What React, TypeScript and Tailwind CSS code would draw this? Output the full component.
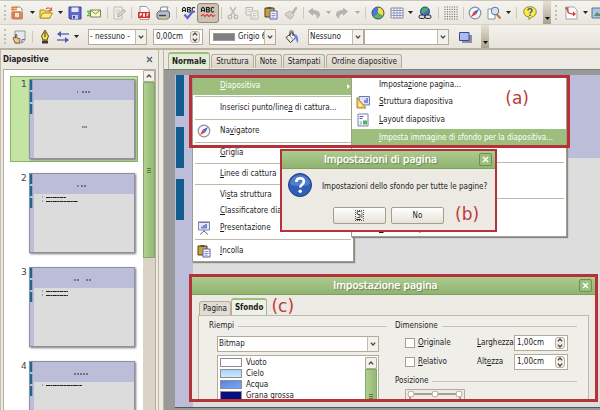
import { useState, type ReactNode } from "react";
import clsx from "clsx";

type IconProps = { children: ReactNode; className?: string };

function Icon({ children, className }: IconProps) {
  return (
    <svg viewBox="0 0 14 14" className={clsx("size-[14px] shrink-0", className)} fill="none" aria-hidden="true">
      {children}
    </svg>
  );
}

const NewIcon = () => (
  <Icon>
    <path d="M3 1h7l2 2v10H3z" fill="#fff" stroke="#8d9196" />
    <path d="M1 1.500h7M1 3.500h6" stroke="#e8873a" strokeWidth="1.4" />
    <path d="M4 6h6v6H4z" fill="#fbe3cf" stroke="#dd6a2c" strokeWidth="1.6" />
    <path d="M2 6v7M12 6v7" stroke="#c35a24" />
  </Icon>
);
const OpenIcon = () => (
  <Icon>
    <path d="M1 12V4h4l1 1h5v7z" fill="#f5dd63" stroke="#b08f1e" />
    <path d="M1 12l3-5h9.500l-3 5z" fill="#fdf08c" stroke="#b08f1e" />
    <path d="M7 3c2-2 4-1 5 1M12.500 1.500V4.500H9.500" stroke="#e0604a" strokeWidth="1.2" />
  </Icon>
);
const SaveIcon = () => (
  <Icon>
    <path d="M1 1h12v12H2l-1-1z" fill="#5e69cf" stroke="#3a429b" />
    <path d="M3.500 1.500h7v4.500h-7z" fill="#e7edfb" />
    <path d="M4 9h6v4H4z" fill="#c6cbe0" />
    <path d="M5 10h2v2.500H5z" fill="#3a429b" />
  </Icon>
);
const MailIcon = () => (
  <Icon>
    <path d="M3.500 4h10v7h-10z" fill="#fdfbc8" stroke="#7f8263" />
    <path d="M3.500 4l5 4 5-4" stroke="#7f8263" />
    <path d="M0 5.500h3M1 7.500h3M0 9.500h3" stroke="#53b848" strokeWidth="1.4" />
  </Icon>
);
const EditIcon = () => (
  <Icon>
    <path d="M2 1h8v12H2z" fill="#f1efea" stroke="#c2beb5" />
    <path d="M4 4h4M4 6h4M4 8h2" stroke="#cbc8c0" />
    <path d="M5.500 11l1-3 5-5 2 2-5 5z" fill="#d5d2ca" stroke="#b2aea4" />
  </Icon>
);
const PdfIcon = () => (
  <Icon>
    <path d="M3 .5h6l3 3v10H3z" fill="#fff" stroke="#9a9a9a" />
    <path d="M1 6h12v6H1z" fill="#dd2b2b" />
    <path d="M3 10.500v-3h1.500v1.500H3M6.500 7.500v3h1v-3zM10 10.500v-3h1.500M10 9h1.500" stroke="#fff" strokeWidth=".9" />
  </Icon>
);
const PrintIcon = () => (
  <Icon>
    <path d="M4 6l1-5h7l-1.500 5z" fill="#fff" stroke="#81848b" />
    <path d="M1 7l2-2h9.500l1 2v4l-2 2H2l-1-2z" fill="#b9bcc9" stroke="#5f626c" />
    <path d="M3 9.500h7" stroke="#44464f" strokeWidth="1.4" />
    <path d="M3 12l8 0" stroke="#e9d55a" />
  </Icon>
);
const SpellIcon = ({ check }: { check?: boolean }) => (
  <svg viewBox="0 0 16 14" className="h-[14px] w-4 shrink-0" fill="none" aria-hidden="true">
    <path
      d="M1.500 6V3l1-1.500h1l1 1.500v3M1.500 4.500h3M6.500 6V1.500h2.500l.5 1-1 1.200h-2M8.500 3.700l1 1-.5 1.300H6.500M14 2l-1-.5h-1l-.8 1.200v2l.8 1.300h1l1-.5"
      stroke="#222"
      strokeWidth="1.100"
    />
    {check ? (
      <path d="M3.500 8.500l3 3.500 6-7.500" stroke="#5b63d6" strokeWidth="2.200" />
    ) : (
      <path d="M1 10l2-1.500L5 10.500l2-2 2 2 2-2 2 2 2-1.500" stroke="#e5382f" strokeWidth="1.100" />
    )}
  </svg>
);
const CutIcon = () => (
  <Icon>
    <path d="M4 1l5 8M10 1L5 9" stroke="#c3bfb6" strokeWidth="1.600" />
    <circle cx="4" cy="11" r="1.800" stroke="#bab6ac" strokeWidth="1.300" />
    <circle cx="10" cy="11" r="1.800" stroke="#bab6ac" strokeWidth="1.300" />
  </Icon>
);
const CopyIcon = () => (
  <Icon>
    <path d="M1 1.500h6.500V9H1z" fill="#efede8" stroke="#bdb9af" />
    <path d="M6 5h7v8H6z" fill="#f3f1ed" stroke="#bdb9af" />
    <path d="M2.500 3.500h3M2.500 5.500h3M7.500 7.500h4M7.500 9.500h4M7.500 11h3" stroke="#c9c6be" />
  </Icon>
);
const PasteIcon = () => (
  <Icon>
    <path d="M1 2h9v9H1z" fill="#c8a03b" stroke="#4f4319" />
    <path d="M3.500 1h4v2h-4z" fill="#565344" />
    <path d="M6 5h7v8H6z" fill="#f6f7ff" stroke="#5560ab" />
    <path d="M7.500 7.500h4M7.500 9.500h4M7.500 11.200h3" stroke="#6d78c4" strokeWidth=".8" />
  </Icon>
);
const BrushIcon = () => (
  <Icon>
    <path d="M8 6l4-5 1 1-3.500 5.500z" fill="#c5c1b7" stroke="#b5b1a7" />
    <path d="M1 8l5-3 4 4-3 4C4 12 2 11 1 8z" fill="#dbd8d0" stroke="#b9b5aa" />
    <path d="M3 9l3 3M4.500 7.500l3.500 4" stroke="#c0bcb2" />
  </Icon>
);
const UndoIcon = ({ flip }: { flip?: boolean }) => (
  <Icon className={clsx(flip && "-scale-x-100")}>
    <path d="M1 5.500L6 1.500v2.500c4 0 7 1.500 7 4.500 0 2-1.500 3.500-4 4 1.500-2 .5-4.500-3-4.500V10z" fill="#b7b4ac" />
  </Icon>
);
const PieIcon = () => (
  <Icon>
    <circle cx="7" cy="7" r="6" fill="#4d78dd" />
    <path d="M7 7V1a6 6 0 0 1 5.200 9z" fill="#f5e03c" />
    <path d="M7 7l5.200 3a6 6 0 0 1-9.700 1z" fill="#5cb850" />
    <circle cx="7" cy="7" r="6" stroke="#4b4f6b" />
  </Icon>
);
const TableIcon = () => (
  <Icon>
    <path d="M1 2h12v10H1z" fill="#fff" stroke="#8087a8" />
    <path d="M1 4.500h12M1 7h12M1 9.500h12M4 2v10M7 2v10M10 2v10" stroke="#8f97ba" />
  </Icon>
);
const GlobeIcon = () => (
  <Icon>
    <circle cx="7" cy="5.500" r="4.500" fill="#3e6fd0" stroke="#27427c" />
    <path d="M4 3l3-1.500 3 1-1 2.500-2 .5L5.500 8 3.500 6z" fill="#4fb34b" />
    <rect x="1" y="9" width="6" height="3.500" rx="1.700" fill="#ddd" stroke="#222" />
    <rect x="7" y="9" width="6" height="3.500" rx="1.700" fill="#ddd" stroke="#222" />
  </Icon>
);
const GridIcon = () => (
  <Icon>
    <path
      d="M.5 1h13M.5 3.400h13M.5 5.800h13M.5 8.200h13M.5 10.600h13M.5 13h13"
      stroke="#55534e"
      strokeDasharray="1 1.400"
    />
  </Icon>
);
const CompassIcon = () => (
  <Icon>
    <circle cx="7" cy="7" r="5.800" fill="#f4f6fb" stroke="#8a909c" strokeWidth="1.200" />
    <path d="M11 3L8.300 8.300 5.700 5.700z" fill="#3b64c4" />
    <path d="M3 11l2.700-5.300 2.600 2.600z" fill="#e23c32" />
  </Icon>
);
const ZoomIcon = () => (
  <Icon>
    <path d="M1 3h7v10H1z" fill="#fff" stroke="#8c93a6" />
    <path d="M9.500 8l4 4.500" stroke="#b7793d" strokeWidth="2" />
    <circle cx="8" cy="5" r="3.800" fill="#cfe2f8" stroke="#65718c" />
  </Icon>
);
const HelpIcon = () => (
  <Icon>
    <path d="M7 .8c4 0 6.200 2 6.200 5S11 10.800 8.500 11L6 13.500V11C3 10.600.8 9 .8 5.800S3 .8 7 .8z" fill="#f9ec45" stroke="#8d8530" />
    <path d="M5 4.500c0-2.500 4-2.500 4 0 0 1.500-2 1.500-2 3M7 8.500V10" stroke="#3f4ab0" strokeWidth="1.400" />
  </Icon>
);
const PointsIcon = () => (
  <Icon>
    <path d="M2 1h8l3 3v9H2z" fill="#fff" stroke="#a2a5aa" />
    <path d="M4 3c-1 4 1 5 6 5" stroke="#d83a34" strokeWidth="1.400" />
    <path d="M1 1.500h4L3 4.500zM9 5.500v5l3-2.500z" fill="#d83a34" />
    <path d="M1.500 1.500h2v2h-2z" fill="#4aa64b" />
  </Icon>
);
const ImageIcon = () => (
  <Icon>
    <path d="M1 2h12v10H1z" fill="#a9c6e8" stroke="#65738d" />
    <path d="M3 10l3-4 2 2 2-1 2 3z" fill="#5f8b62" />
  </Icon>
);
const SlideHandIcon = () => (
  <Icon>
    <path d="M3 1h10v9l-3 3H3z" fill="#e7e8ee" stroke="#9598a3" />
    <path d="M13 9.500h-3V13" stroke="#72757f" />
    <path d="M1 8l1-1 1.500 1V4.500h1.300V8L8 8.800 7.500 13H3z" fill="#f1c98c" stroke="#5f4a2a" strokeWidth=".8" />
  </Icon>
);
const PenIcon = () => (
  <Icon>
    <path d="M7 0l3.500 6-1.500 4H5L3.500 6z" fill="#f6dc4e" stroke="#5d5321" />
    <path d="M7 2v5" stroke="#3d3715" />
    <path d="M4 10.500h6v3H4z" fill="#3f3b2c" />
  </Icon>
);
const ArrowsIcon = () => (
  <Icon>
    <path d="M3 4h10M1 10h9" stroke="#6872c4" strokeWidth="1.300" />
    <path d="M5 1v6L1 4zM9 7v6l4-3z" fill="#5059b5" />
  </Icon>
);
const BucketIcon = () => (
  <Icon>
    <path d="M1 7.500l6-5 4 5-5.500 5z" fill="#f1f1ee" stroke="#33343a" />
    <path d="M4 5l4.500 5" stroke="#9b9ca0" />
    <path d="M5 6V2c0-2 3-1.500 3 0v4" stroke="#33343a" />
    <path d="M9 4c3 0 5 3 4 9-2-1-1.500-5-4-6z" fill="#7084e4" />
  </Icon>
);
const ShadowIcon = () => (
  <Icon>
    <path d="M4 5h10v8H4z" fill="#8e8f99" />
    <path d="M1.500 2.500h9.500v8H1.500z" fill="#a9bcf5" stroke="#3b4a93" />
  </Icon>
);
const StructureIcon = () => (
  <Icon>
    <path d="M3 1.500h10.500v8.500H3z" fill="#dfe4fb" stroke="#6b76b5" />
    <path d="M9 8V5M11 8V3" stroke="#4d5bc7" strokeWidth="1.300" />
    <path d="M1 2.500l9 10.500H1z" fill="#f4d258" stroke="#a8842a" />
    <path d="M3.200 8v3h2.600z" fill="#fff" />
  </Icon>
);
const LayoutIcon = () => (
  <Icon>
    <path d="M2 1h10v12H2z" fill="#fff" stroke="#7880a8" />
    <path d="M3.500 3.500h4M3.500 5.500h3" stroke="#4d5bc7" />
    <path d="M7 7.500h4v4H7z" fill="#4eb558" />
    <path d="M3.500 9h2.500M3.500 11h2.500" stroke="#8f97c4" />
  </Icon>
);
const PresentIcon = () => (
  <Icon>
    <path d="M1.500 1.500h11v7.500h-11z" fill="#e6e9fb" stroke="#7b86b7" />
    <path d="M1 1h12M7 9v2M7 10l-4 3.500M7 10l4 3.500" stroke="#6a6f84" />
    <path d="M5 7.500V5.500M7 7.500V4M9 7.500V3" stroke="#4653c4" strokeWidth="1.300" />
  </Icon>
);
const CloseGlyph = () => (
  <svg viewBox="0 0 7 7" className="size-[7px]" aria-hidden="true">
    <path d="M1 1l5 5M6 1L1 6" stroke="currentColor" strokeWidth="1.400" />
  </svg>
);
const Chevron = ({ up }: { up?: boolean }) => (
  <svg viewBox="0 0 6 4" className={clsx("h-1 w-1.5", up && "rotate-180")} fill="none" aria-hidden="true">
    <path d="M.8.6L3 3 5.200.6" stroke="#4a463d" strokeWidth="1.300" />
  </svg>
);

const Grip = () => (
  <span className="flex w-[9px] shrink-0 justify-center">
    <span className="h-[15px] border-l-2 border-dotted border-[#c5beae]" />
  </span>
);
const Sep = ({ className = "w-1" }: { className?: string }) => (
  <span className={clsx("flex shrink-0 justify-center", className)}>
    <span className="h-3 w-px bg-[#d2c8b4]" />
  </span>
);

function Tool({ label, className = "w-5", children }: { label: string; className?: string; children: ReactNode }) {
  return (
    <button type="button" aria-label={label} className={clsx("flex h-5 shrink-0 items-center justify-center", className)}>
      {children}
    </button>
  );
}

function Drop({ className = "w-2.5", dim }: { className?: string; dim?: boolean }) {
  return (
    <button type="button" aria-label="Altre opzioni" className={clsx("flex h-5 shrink-0 items-center justify-center", className)}>
      <svg viewBox="0 0 5 3" className="h-[3px] w-[5px]" aria-hidden="true">
        <path d="M0 0h5L2.500 3z" fill={dim ? "#b5a98f" : "#222"} />
      </svg>
    </button>
  );
}

const Overflow = ({ className }: { className?: string }) => (
  <button
    type="button"
    aria-label="Altri comandi"
    className={clsx("flex w-2 shrink-0 items-end justify-center self-stretch bg-linear-to-b from-[#e4dfd5] to-[#aca28f] pb-1", className)}
  >
    <svg viewBox="0 0 5 3" className="h-[3px] w-[5px]" aria-hidden="true">
      <path d="M0 0h5L2.500 3z" fill="#111" />
    </svg>
  </button>
);

function Combo({ label, value, className, swatch }: { label: string; value: string; className?: string; swatch?: boolean }) {
  return (
    <div className={clsx("flex h-4 shrink-0 items-stretch border border-[#b3ab98] bg-white", className)}>
      {swatch && <span className="my-[3px] ml-[3px] w-[22px] shrink-0 border border-[#999] bg-[#808080]" />}
      <select aria-label={label} className={clsx("min-w-0 flex-1 appearance-none truncate bg-transparent text-clip outline-none", swatch ? "pl-[3px]" : "pl-px")}>
        <option>{value}</option>
      </select>
      <span className="pointer-events-none flex w-[11px] shrink-0 items-center justify-center border-l border-[#c3bcab] bg-[#f3f1ec]">
        <Chevron />
      </span>
    </div>
  );
}

function Spin({ id, label, value, className }: { id: string; label?: string; value: string; className?: string }) {
  return (
    <div className={clsx("flex h-4 shrink-0 items-center border border-[#b3ab98] bg-white pr-0.5", className)}>
      <input id={id} aria-label={label} defaultValue={value} className="min-w-0 flex-1 bg-transparent pl-0.5 text-[8px] outline-none" />
      <button type="button" aria-label="Modifica valore" className="flex h-3 w-2.5 flex-col items-center justify-center gap-0.5 rounded-[3px] border border-[#b9b19f] bg-[#f1eee8]">
        <Chevron up />
        <Chevron />
      </button>
    </div>
  );
}

function Toolbars() {
  return (
    <header className="border-b-2 border-[#b9b1a0] bg-[#edeae3]">
      <div className="flex h-[25px] items-center overflow-hidden border-t border-b border-t-[#cbc6ba] border-b-[#d8d2c4] bg-linear-to-b from-[#f5f3ef] to-[#e9e6de]">
        <Grip />
        <Tool label="Nuovo" className="w-4"><NewIcon /></Tool>
        <Drop className="w-[14px]" />
        <Tool label="Apri" className="w-[14px]"><OpenIcon /></Tool>
        <Drop className="w-[14px]" />
        <Tool label="Salva" className="w-4"><SaveIcon /></Tool>
        <Tool label="Invia" className="w-[22px]"><MailIcon /></Tool>
        <Sep />
        <Tool label="Modifica file"><EditIcon /></Tool>
        <Sep />
        <Tool label="Esporta PDF" className="w-[22px]"><PdfIcon /></Tool>
        <Tool label="Stampa" className="w-4"><PrintIcon /></Tool>
        <Sep className="w-2.5" />
        <Tool label="Controllo ortografico" className="w-4"><SpellIcon check /></Tool>
        <Tool label="Controllo automatico" className="w-[22px] rounded-[3px] border border-[#8f8878] bg-[#cbc4b5]"><SpellIcon /></Tool>
        <Sep />
        <Tool label="Taglia"><CutIcon /></Tool>
        <Tool label="Copia" className="w-[18px]"><CopyIcon /></Tool>
        <Tool label="Incolla"><PasteIcon /></Tool>
        <Tool label="Pennello"><BrushIcon /></Tool>
        <Sep />
        <Tool label="Annulla" className="w-[18px]"><UndoIcon /></Tool>
        <Drop dim />
        <Tool label="Ripristina" className="w-[18px]"><UndoIcon flip /></Tool>
        <Drop dim className="w-3" />
        <Sep />
        <Tool label="Grafico" className="w-[22px]"><PieIcon /></Tool>
        <Tool label="Tabella" className="w-4"><TableIcon /></Tool>
        <Drop />
        <Tool label="Collegamento"><GlobeIcon /></Tool>
        <Sep className="w-1.5" />
        <Tool label="Griglia"><GridIcon /></Tool>
        <Sep />
        <Tool label="Navigatore"><CompassIcon /></Tool>
        <Tool label="Zoom" className="w-[18px]"><ZoomIcon /></Tool>
        <Drop />
        <Sep className="w-1.5" />
        <Tool label="Guida" className="w-[22px]"><HelpIcon /></Tool>
        <Overflow className="ml-0.5" />
        <Grip />
        <Tool label="Punti" className="w-[22px]"><PointsIcon /></Tool>
        <Drop className="w-1.5" />
        <Tool label="Immagine"><ImageIcon /></Tool>
      </div>

      <div className="flex h-[23px] items-center bg-linear-to-b from-[#f3f1ec] to-[#e8e4db]">
        <Grip />
        <Tool label="Stili"><SlideHandIcon /></Tool>
        <Sep className="w-1.5" />
        <Tool label="Linea"><PenIcon /></Tool>
        <Tool label="Estremità linea" className="w-4"><ArrowsIcon /></Tool>
        <Drop />
        <Combo label="Stile linea" value="- nessuno -" className="ml-[7px] w-[59px]" />
        <Spin id="line-width" label="Spessore linea" value="0,00cm" className="ml-1.5 w-[50px]" />
        <Combo label="Colore linea" value="Grigio 6" swatch className="ml-1.5 w-[67px]" />
        <Tool label="Area" className="w-8"><BucketIcon /></Tool>
        <Combo label="Riempimento" value="Nessuno" className="w-14" />
        <Combo label="Colore riempimento" value="" className="w-[85px]" />
        <Tool label="Ombra" className="w-8"><ShadowIcon /></Tool>
        <Overflow />
      </div>
    </header>
  );
}

type Slide = { title: string; bullets: number[] };

// bullet values are line lengths in the miniature
const SLIDES: Slide[] = [
  { title: "M48 13h1M53 13h9", bullets: [] },
  { title: "M48 13h1.500M52 13h6", bullets: [20, 32] },
  { title: "M45 13h6M57 13h5", bullets: [22, 22] },
  { title: "M45 13h14", bullets: [36] },
];

function Thumbnail({ slide, first }: { slide: Slide; first: boolean }) {
  return (
    <svg viewBox="0 0 106 80" className="h-20 w-[106px] shrink-0 shadow-[1px_1px_2px_#777]" fill="none" aria-hidden="true">
      <rect width="106" height="80" fill="#dcdcdc" />
      <path d="M0 0h106v21H5v59H0z" fill="#bbbdd9" />
      <path d="M2 1v10M2 13v10M2 25v10" stroke="#1f6590" strokeWidth="2.500" />
      <path d={slide.title} stroke="#5a5b70" strokeWidth="1.300" strokeDasharray="2 1" />
      {first && <path d="M53 48h5" stroke="#666" strokeWidth="1.300" strokeDasharray="1.500 .5" />}
      {slide.bullets.map((len, i) => (
        <g key={i} transform={`translate(0 ${i * 4})`}>
          <path d="M13 24h1" stroke="#2a8f7c" />
          <path d={`M17 24.500h${len}`} stroke="#222" strokeWidth="1.200" strokeDasharray="4 .4 2 .4" />
        </g>
      ))}
      <rect x=".5" y=".5" width="105" height="79" stroke="#8f91a2" />
    </svg>
  );
}

function SlidePanel() {
  return (
    <aside className="flex w-[158px] shrink-0 flex-col border-l border-[#c3bba9] px-0.5">
      <div className="flex h-[19px] shrink-0 items-center justify-between pr-[3px]">
        <h2 className="font-bold">Diapositive</h2>
        <button type="button" aria-label="Chiudi pannello" className="text-[#5a6375]"><CloseGlyph /></button>
      </div>
      <div className="flex min-h-0 flex-1 border border-b-0 border-[#b5ad9b] bg-white">
        <ol className="flex min-w-0 flex-1 flex-col gap-2 overflow-hidden pt-1.5 pr-[5px] pl-1.5">
          {SLIDES.map((slide, i) => (
            <li
              key={i}
              className={clsx(
                "flex shrink-0 justify-between border py-0.5 pr-0.5 pl-2.5",
                i === 0 ? "border-[#88b566] bg-[#c3e4a2]" : "border-transparent"
              )}
            >
              <span className="font-['DejaVu_Sans'] text-[9px] leading-[10px] text-[#444]">{i + 1}</span>
              <Thumbnail slide={slide} first={i === 0} />
            </li>
          ))}
        </ol>
        <ScrollBar thumb="h-44" />
      </div>
    </aside>
  );
}

function ScrollBar({ thumb }: { thumb: string }) {
  return (
    <div className="flex w-3 shrink-0 flex-col bg-[#dad3c6]">
      <button type="button" aria-label="Scorri in su" className="flex h-3 shrink-0 items-center justify-center rounded-[2px] border border-[#b3ab98] bg-[#f3f1ec]">
        <Chevron up />
      </button>
      <div className={clsx("flex shrink-0 flex-col items-center justify-center gap-px border border-[#84a867] bg-linear-to-r from-[#b0d08f] to-[#94b877]", thumb)}>
        <span className="h-px w-1 bg-[#587a3f]" />
        <span className="h-px w-1 bg-[#587a3f]" />
        <span className="h-px w-1 bg-[#587a3f]" />
      </div>
    </div>
  );
}

const VIEWS = ["Normale", "Struttura", "Note", "Stampati", "Ordine diapositive"];

function Workspace() {
  const [view, setView] = useState("Normale");
  return (
    <main className="flex min-w-0 flex-1 flex-col">
      <div role="tablist" className="flex h-[19px] shrink-0 items-end gap-px pl-1">
        {VIEWS.map((name) => (
          <button
            key={name}
            type="button"
            role="tab"
            aria-selected={view === name}
            onClick={() => setView(name)}
            className={clsx(
              "rounded-t-[3px] border border-b-0 border-[#b5ad9b]",
              view === name
                ? "h-[17px] border-t-2 border-t-[#9dbe7d] bg-[#e3ecd6] px-[3px] font-bold"
                : "mb-px h-[14px] bg-linear-to-b from-[#ece9e2] to-[#d9d3c6] px-1"
            )}
          >
            {name}
          </button>
        ))}
      </div>
      <div className="flex min-h-0 flex-1 flex-col border-t border-[#7d7d7d] bg-[#999] pt-[5px] pb-0.5 pl-[11px]">
        <div className="flex flex-1 border-b border-[#555] bg-[#bbbdd9]">
          <div className="flex w-[18px] flex-col gap-[11px] pl-px">
            <span className="h-[41px] w-2 bg-[#135c8f]" />
            <span className="h-[41px] w-2 bg-[#135c8f]" />
            <span className="h-[41px] w-2 bg-[#135c8f]" />
          </div>
          <div className="mt-[83px] flex-1 bg-[#dddddd]" />
        </div>
      </div>
    </main>
  );
}

function MenuItem({ text, hot, icon, active, arrow, className = "h-[18px] items-center" }: {
  text: string;
  hot: string;
  icon?: ReactNode;
  active?: boolean;
  arrow?: boolean;
  className?: string;
}) {
  const at = text.indexOf(hot);
  return (
    <button
      type="button"
      role="menuitem"
      className={clsx("flex w-full shrink-0 text-left whitespace-nowrap", active && "bg-[#9dbe7d] text-white", className)}
    >
      <span className="flex w-[27px] shrink-0 justify-center pr-1.5">{icon}</span>
      <span className="flex-1">
        {text.slice(0, at)}
        <u>{hot}</u>
        {text.slice(at + hot.length)}
      </span>
      {arrow && (
        <svg viewBox="0 0 3 5" className="mr-[3px] h-[5px] w-[3px]" aria-hidden="true">
          <path d="M0 0v5l3-2.500z" fill="#fff" />
        </svg>
      )}
    </button>
  );
}

const MenuSep = () => <hr className="mx-0.5 my-px h-px shrink-0 border-0 bg-[#c1b9a7]" />;

function ContextMenus() {
  return (
    <>
      <div role="menu" className="absolute top-[75px] left-[192px] flex w-[162px] flex-col border border-[#a59d8c] bg-white pt-px shadow-[1px_1px_1px_#888]">
        <MenuItem text="Diapositiva" hot="D" active arrow />
        <MenuSep />
        <MenuItem text="Inserisci punto/linea di cattura..." hot="a" className="h-5 items-center" />
        <MenuSep />
        <MenuItem text="Navigatore" hot="v" icon={<CompassIcon />} className="h-5 items-center" />
        <MenuSep />
        <MenuItem text="Griglia" hot="G" />
        <MenuSep />
        <MenuItem text="Linee di cattura" hot="L" />
        <MenuSep />
        <MenuItem text="Vista struttura" hot="s" />
        <MenuItem text="Classificatore diapositive" hot="C" className="h-[14px] items-center" />
        <MenuItem text="Presentazione" hot="P" icon={<PresentIcon />} className="h-5 items-center" />
        <MenuSep />
        <MenuItem text="Incolla" hot="I" icon={<PasteIcon />} className="h-5 items-center" />
      </div>

      <div role="menu" className="absolute top-[75px] left-[351px] flex w-[216px] flex-col border border-[#a59d8c] bg-white pt-px shadow-[1px_1px_1px_#888]">
        <MenuItem text="Impostazione pagina..." hot="z" className="h-4 items-center" />
        <MenuItem text="Struttura diapositiva" hot="S" icon={<StructureIcon />} />
        <MenuItem text="Layout diapositiva" hot="L" icon={<LayoutIcon />} />
        <MenuItem text="Imposta immagine di sfondo per la diapositiva..." hot="I" active />
        <div className="h-[14px]" />
        <MenuSep />
        <div className="h-[33px]" />
        <MenuSep />
        <MenuItem text="Elimina diapositiva" hot="E" className="h-9 items-end pb-0.5" />
      </div>

      <div className="pointer-events-none absolute top-[75px] left-[189px] flex h-[73px] w-[381px] items-start justify-end border-3 border-[#b5323a] pt-2.5 pr-[38px]">
        <Mark>(a)</Mark>
      </div>
    </>
  );
}

const Mark = ({ children }: { children: ReactNode }) => (
  <span className="font-['DejaVu_Sans'] text-[17px] leading-5 text-[#bd3a3c]">{children}</span>
);

function TitleBar({ title }: { title: string }) {
  return (
    <div className="flex h-[18px] shrink-0 items-center border-b border-[#7f9f64] bg-linear-to-b from-[#adcc8f] to-[#90b370] pr-[3px] text-white">
      <h2 className="flex-1 text-center font-['DejaVu_Sans'] text-[10px] leading-4 [text-shadow:0_0_1px_#fff,1px_1px_1px_#54703d]">{title}</h2>
      <button type="button" aria-label="Chiudi" className="flex size-[13px] items-center justify-center rounded-[2px] border border-[#6d9150] bg-[#9dbf7e]">
        <CloseGlyph />
      </button>
    </div>
  );
}

function ConfirmDialog() {
  const button = "h-[17px] w-[53px] rounded-[2px] border border-[#a79f8d] bg-linear-to-b from-white to-[#e6e2d9]";
  return (
    <section role="dialog" aria-label="Impostazioni di pagina" className="absolute top-[149px] left-[280px] w-[217px] border-2 border-[#b5323a] bg-[#edeae3] pb-1.5">
      <TitleBar title="Impostazioni di pagina" />
      <div className="flex items-center gap-2.5 pt-1 pl-1.5">
        <svg viewBox="0 0 24 24" className="size-6 shrink-0" aria-hidden="true">
          <circle cx="12" cy="12" r="11.500" fill="#2f5fb8" stroke="#1f3f86" />
          <path d="M2 11a10 9 0 0 1 20 0c-5 3-15 3-20 0z" fill="#6f95da" opacity=".55" />
          <path d="M8.300 9c0-5 7.600-5 7.600-.4 0 3-3.600 3-3.600 6" fill="none" stroke="#fff" strokeWidth="2.600" />
          <circle cx="12.200" cy="18.300" r="1.700" fill="#fff" />
        </svg>
        <p className="pt-1 whitespace-nowrap">Impostazioni dello sfondo per tutte le pagine?</p>
      </div>
      <div className="flex items-center gap-[5px] pt-2.5 pl-[51px]">
        <button type="button" className={button}>
          <span className="outline-1 outline-dotted outline-[#555]"><u>S</u>ì</span>
        </button>
        <button type="button" className={button}>No</button>
        <span className="-mt-1 ml-1.5 flex h-4 items-center"><Mark>(b)</Mark></span>
      </div>
    </section>
  );
}

const FILLS = [
  { name: "Vuoto", color: "bg-white" },
  { name: "Cielo", color: "bg-linear-to-b from-[#a8d4fa] to-[#cfe8fd]" },
  { name: "Acqua", color: "bg-linear-to-br from-[#5585e0] to-[#7da6f0]" },
  { name: "Grana grossa", color: "bg-[#0a0f80]" },
];

const Legend = ({ children }: { children: ReactNode }) => (
  <div className="flex h-3 shrink-0 items-center gap-1">
    <h3>{children}</h3>
    <span className="h-px flex-1 bg-[#c9c2b2]" />
  </div>
);

function SizeRow({ id, check, label, hot, value }: { id: string; check: string; label: string; hot: string; value: string }) {
  const at = label.indexOf(hot);
  return (
    <div className="flex h-[19px] shrink-0 items-center pl-2.5">
      <label className="flex flex-1 items-center gap-[3px]">
        <input type="checkbox" className="size-2.5 appearance-none border border-[#a79f8d] bg-white" />
        <span><u>{check[0]}</u>{check.slice(1)}</span>
      </label>
      <label htmlFor={id} className="w-[37px] overflow-hidden whitespace-nowrap">
        {label.slice(0, at)}<u>{hot}</u>{label.slice(at + 1)}
      </label>
      <Spin id={id} value={value} className="mr-[9px] w-[54px]" />
    </div>
  );
}

function PageDialog() {
  return (
    <section
      role="dialog"
      aria-label="Impostazione pagina"
      className="absolute top-[274px] right-0.5 left-[189px] flex h-[128px] flex-col overflow-hidden border-3 border-[#b5323a] bg-[#edeae3]"
    >
      <TitleBar title="Impostazione pagina" />
      <div role="tablist" className="flex h-5 shrink-0 items-end pl-[7px]">
        <button type="button" role="tab" aria-selected="false" className="h-[14px] rounded-t-[3px] border border-b-0 border-[#b5ad9b] bg-[#e2ddd2] px-[3px]">Pagina</button>
        <button type="button" role="tab" aria-selected="true" className="h-[17px] rounded-t-[3px] border border-b-0 border-t-2 border-[#b5ad9b] border-t-[#9dbe7d] bg-[#eef1e6] px-[3px] font-bold">Sfondo</button>
        <span className="ml-1 flex h-[18px] items-center"><Mark>(c)</Mark></span>
      </div>
      <div className="mx-1.5 flex min-h-0 flex-1 gap-2 overflow-hidden border border-b-0 border-[#c1b9a7] bg-[#f0eee9] pt-1 pr-[11px] pl-2.5">
        <div className="flex flex-1 flex-col">
          <Legend>Riempi</Legend>
          <div className="flex shrink-0 flex-col gap-[3px] pt-1 pr-2 pl-2">
            <Combo label="Riempi" value="Bitmap" />
            <div className="flex h-[72px] items-stretch border border-[#b3ab98] bg-white p-px">
              <ul role="listbox" aria-label="Bitmap" className="flex-1 pl-px">
                {FILLS.map((fill) => (
                  <li key={fill.name} role="option" aria-selected="false" className="flex h-[11px] items-center gap-1">
                    <span className={clsx("h-[9px] w-[22px] border border-[#8d8d99]", fill.color)} />
                    {fill.name}
                  </li>
                ))}
              </ul>
              <ScrollBar thumb="h-[54px]" />
            </div>
          </div>
        </div>
        <div className="flex w-[182px] shrink-0 flex-col">
          <Legend>Dimensione</Legend>
          <div className="shrink-0 pt-px pb-1">
            <SizeRow id="size-w" check="Originale" label="Larghezza" hot="L" value="1,00cm" />
            <SizeRow id="size-h" check="Relativo" label="Altezza" hot="e" value="1,00cm" />
          </div>
          <Legend>Posizione</Legend>
          <svg viewBox="0 0 60 40" className="mt-0.5 ml-2.5 h-10 w-[60px] shrink-0" aria-hidden="true">
            <path d="M.5.5h59v39H.5z" fill="#eeebe4" stroke="#b5ad9b" />
            <path d="M5 5h50M5 5v30M55 5v30" stroke="#555" />
            <g fill="#fff" stroke="#b5ad9b">
              <circle cx="6" cy="5" r="3" />
              <circle cx="30" cy="5" r="3" />
              <circle cx="54" cy="5" r="3" />
            </g>
          </svg>
        </div>
      </div>
    </section>
  );
}

export default function App() {
  return (
    <div className="relative flex h-screen flex-col overflow-hidden bg-[#edeae3] font-['DejaVu_Sans_Condensed','DejaVu_Sans',sans-serif] text-[8px] leading-[10px] text-[#1c1c1c]">
      <Toolbars />
      <div className="flex min-h-0 flex-1">
        <SlidePanel />
        <div className="w-1.5 shrink-0 border-x border-[#bdb5a4] bg-[#edeae3]" />
        <Workspace />
      </div>
      <ContextMenus />
      <ConfirmDialog />
      <PageDialog />
    </div>
  );
}
